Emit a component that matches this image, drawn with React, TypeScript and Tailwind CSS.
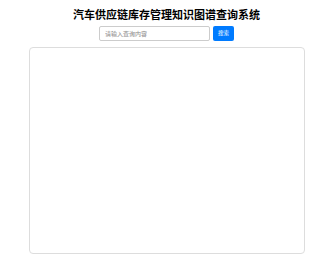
const App = () => {
  return (
    <div className="w-full h-[268px] bg-white pl-[4px] flex flex-col items-center font-['Noto_Sans_CJK_SC',sans-serif]">
      <h1 className="mt-[7px] text-[11px] leading-[14px] font-bold text-black">
        汽车供应链库存管理知识图谱查询系统
      </h1>
      <div className="mt-[5px] flex gap-[3px]">
        <input
          type="text"
          placeholder="请输入查询内容"
          className="w-[111px] h-[15px] px-[5px] text-[6px] border border-[#ccc] rounded-[2px] outline-none placeholder:text-[#888]"
        />
        <button className="w-[21px] h-[15px] text-[5.5px] text-white bg-[#007bff] rounded-[2px]">
          搜索
        </button>
      </div>
      <div className="mt-[6px] w-[276px] h-[207px] border border-[#ddd] rounded-[4px]"></div>
    </div>
  )
}

export default App
